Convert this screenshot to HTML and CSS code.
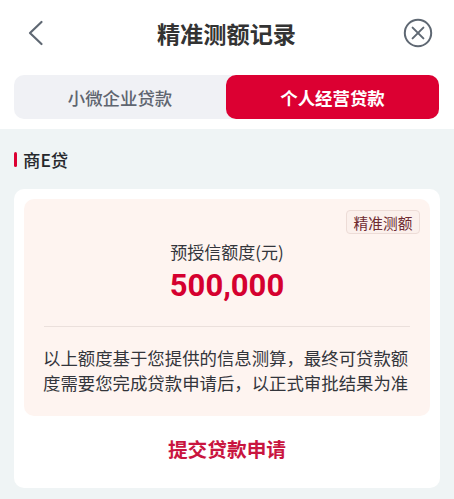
FILE: index.html
```html
<!DOCTYPE html>
<html lang="zh">
<head>
<meta charset="utf-8">
<title>精准测额记录</title>
<link rel="stylesheet" href="styles.css">
</head>
<body>
<div class="top">
  <header class="nav">
    <svg class="back" width="18" height="26" viewBox="0 0 18 26"><path d="M14.5 2 L3 13 L14.5 24" fill="none" stroke="#5f6873" stroke-width="2.2" stroke-linecap="round" stroke-linejoin="round"/></svg>
    <h1 class="title">精准测额记录</h1>
    <svg class="close" width="30" height="30" viewBox="0 0 30 30"><circle cx="15" cy="15" r="13.2" fill="none" stroke="#5f6873" stroke-width="2"/><path d="M9.6 9.6 L20.4 20.4 M20.4 9.6 L9.6 20.4" fill="none" stroke="#5f6873" stroke-width="2" stroke-linecap="round"/></svg>
  </header>
  <div class="tabs">
    <div class="tab">小微企业贷款</div>
    <div class="tab active">个人经营贷款</div>
  </div>
</div>
<main class="content">
  <h2 class="section"><span class="mark"></span>商E贷</h2>
  <section class="card">
    <div class="panel">
      <div class="badge-row"><span class="badge">精准测额</span></div>
      <div class="label">预授信额度(元)</div>
      <div class="amount">500,000</div>
      <div class="divider"></div>
      <p class="note">以上额度基于您提供的信息测算，最终可贷款额度需要您完成贷款申请后，以正式审批结果为准</p>
    </div>
    <div class="action">提交贷款申请</div>
  </section>
</main>
</body>
</html>
```
FILE: styles.css
```css
* { box-sizing: border-box; }
html, body { margin: 0; padding: 0; }
body {
  width: 454px;
  height: 499px;
  overflow: hidden;
  background: #eff4f5;
  font-family: "Noto Sans CJK SC", "Liberation Sans", sans-serif;
}
.top { background: #fff; height: 129px; padding: 0 14px; }
.nav {
  height: 75px;
  display: flex;
  align-items: center;
  justify-content: space-between;
  padding: 0 7px 9px 13px;
}
.title { margin: 0 0 0 5px; font-size: 23.2px; line-height: 32px; font-weight: 700; color: #333; }
.tabs {
  display: flex;
  width: 425px;
  height: 44px;
  background: #f0f1f5;
  border-radius: 10px;
}
.tab {
  flex: 1;
  display: flex;
  align-items: center;
  justify-content: center;
  font-size: 17.4px;
  font-weight: 500;
  color: #5f6570;
  border-radius: 10px;
}
.tab.active { flex: 0 0 213px; background: #dc0032; color: #fff; font-weight: 700; }
.content { padding: 0 14px; }
.section {
  margin: 0;
  height: 60px;
  display: flex;
  align-items: center;
  gap: 6px;
  font-size: 17.4px;
  font-weight: 500;
  color: #26282c;
}
.mark { width: 3px; height: 15px; background: #dc0032; border-radius: 2px; }
.card {
  width: 426px;
  height: 299px;
  background: #fff;
  border-radius: 10px;
  padding: 10px;
}
.panel {
  height: 217px;
  background: #fef4f0;
  border-radius: 10px;
  padding: 11px 20px 0;
}
.badge-row { display: flex; justify-content: flex-end; margin-right: -10px; height: 24px; }
.badge {
  width: 74px;
  height: 24px;
  display: flex;
  align-items: center;
  justify-content: center;
  font-size: 14.7px;
  color: #6e2a30;
  background: #fbf0ec;
  border: 1px solid #eddcd7;
  border-radius: 4px;
}
.label {
  margin-top: 5px;
  height: 26px;
  line-height: 26px;
  text-align: center;
  font-size: 17px;
  color: #33353b;
}
.amount {
  height: 38px;
  margin-top: 2px;
  line-height: 38px;
  text-align: center;
  font-family: Roboto, "Liberation Sans", sans-serif;
  font-size: 31px;
  font-weight: 700;
  color: #d5002f;
}
.divider { margin-top: 21px; height: 1px; background: #ebe0dc; }
.note {
  margin: 18px 0 0 -1px;
  font-size: 17.4px;
  line-height: 25px;
  color: #33353b;
}
.action {
  height: 64px;
  display: flex;
  align-items: center;
  justify-content: center;
  font-size: 19.7px;
  font-weight: 700;
  color: #c9153f;
}
```
